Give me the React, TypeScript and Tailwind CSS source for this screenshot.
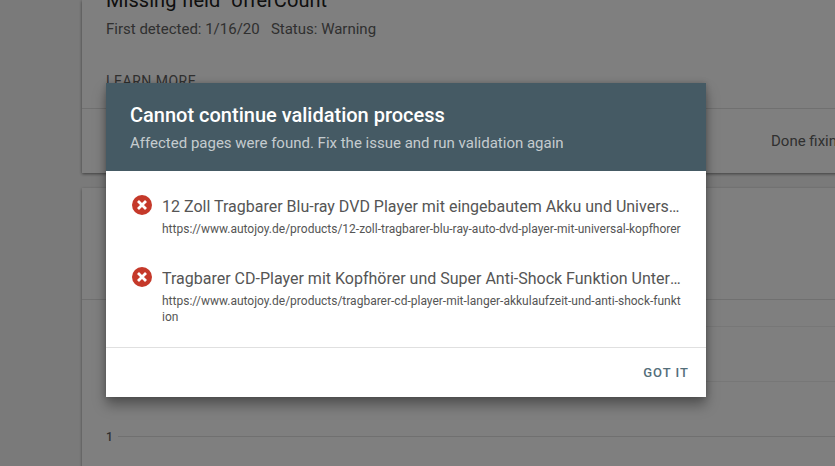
export default function App() {
  const X = (
    <svg viewBox="0 0 24 24" className="w-6 h-6 shrink-0 mt-[-4px]" aria-hidden="true">
      <circle cx="12" cy="12" r="10" fill="#c5392a" />
      <path d="M8 8 L16 16 M16 8 L8 16" stroke="#fff" strokeWidth="2.8" fill="none" />
    </svg>
  );
  const items = [
    {
      t: "12 Zoll Tragbarer Blu-ray DVD Player mit eingebautem Akku und Universal-Kopfhörer Anschluss",
      u: "https://www.autojoy.de/products/12-zoll-tragbarer-blu-ray-auto-dvd-player-mit-universal-kopfhorer",
    },
    {
      t: "Tragbarer CD-Player mit Kopfhörer und Super Anti-Shock Funktion Unterstützt MP3 und WMA",
      u: "https://www.autojoy.de/products/tragbarer-cd-player-mit-langer-akkulaufzeit-und-anti-shock-funktion",
    },
  ];
  return (
    <div className="relative w-[835px] h-[466px] overflow-hidden bg-[#f5f5f5] font-['Roboto',sans-serif]">
      <div className="pl-[82px] h-full">
        <div className="h-[173px] bg-white shadow-[0_1px_3px_rgba(0,0,0,0.5)] flex flex-col -mr-10">
          <div className="h-[121px] shrink-0 border-b border-[#e0e0e0] pl-6 -mt-[12px]">
            <div className="text-[20px] leading-[24px] tracking-[0.05px] text-[#212121]">Missing field "offerCount"</div>
            <div className="mt-[7px] text-[15px] leading-[20px] text-[#616161] whitespace-pre">First detected: 1/16/20   Status: Warning</div>
            <div className="mt-[34px] text-sm leading-[16px] text-[#616161] tracking-[0.5px]">LEARN MORE</div>
          </div>
          <div className="flex-1 flex items-center justify-end">
            <div className="w-[104px] text-[15px] text-[#616161] whitespace-nowrap">Done fixing</div>
          </div>
        </div>
        <div className="mt-[15px] h-[300px] bg-white shadow-[0_1px_3px_rgba(0,0,0,0.4)] -mr-10 flex flex-col">
          <div className="h-[112px] shrink-0 border-b border-[#e0e0e0]" />
          <div className="pl-9 flex flex-col">
            <div className="h-[27px] border-b border-[#eeeeee]" />
            <div className="h-[55px] border-b border-[#eeeeee]" />
            <div className="relative h-[55px] border-b border-[#e0e0e0]">
              <span className="absolute -left-3 bottom-[-9px] text-xs font-medium leading-[16px] text-[#616161]">1</span>
            </div>
          </div>
        </div>
      </div>

      <div className="absolute inset-0 bg-black/50" />

      <div className="absolute left-[106px] top-[83px] w-[600px] bg-white shadow-[0_8px_12px_0_rgba(0,0,0,0.35),0_0_6px_0_rgba(0,0,0,0.2)]">
        <div className="h-[88px] bg-[#455a64] px-6 pt-5">
          <div className="text-[20px] leading-[24px] font-medium text-white">Cannot continue validation process</div>
          <div className="mt-[6px] text-[15px] leading-[20px] text-white/70">Affected pages were found. Fix the issue and run validation again</div>
        </div>
        <div className="pt-[26px] h-[177px] border-b border-[#e0e0e0] flex flex-col gap-8 px-6">
          {items.map((it) => (
            <div key={it.u} className="flex gap-2">
              {X}
              <div className="min-w-0 flex-1">
                <div className="truncate text-base leading-[20px] text-[#555555]">{it.t}</div>
                <div className="mt-1 text-xs leading-[16px] text-[#555555] break-all">{it.u}</div>
              </div>
            </div>
          ))}
        </div>
        <div className="h-[49px] flex items-center justify-end pr-[17px]">
          <span className="text-[13px] font-medium tracking-[1px] text-[#546e7a]">GOT IT</span>
        </div>
      </div>
    </div>
  );
}
